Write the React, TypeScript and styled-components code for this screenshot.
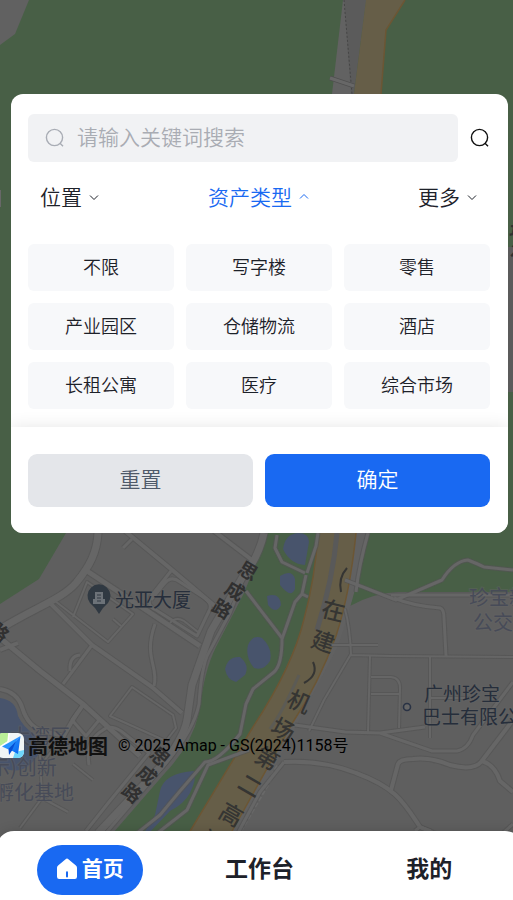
import React, { useState } from "react";
import styled, { createGlobalStyle } from "styled-components";

const sans = `Roboto, "Noto Sans CJK SC", sans-serif`;
const cjk = `"Noto Sans CJK SC", sans-serif`;

const GlobalStyle = createGlobalStyle`
  *, *::before, *::after { box-sizing: border-box; }
  body { margin: 0; background: #5f5f5f; font-family: ${cjk}; }
  button, input { font-family: inherit; font-weight: 350; }
`;

const Page = styled.div`
  position: relative;
  display: flex;
  flex-direction: column;
  min-height: 100vh;
  overflow: hidden;
`;

const MapLayer = styled.svg`
  position: absolute;
  inset: 0;
  width: 100%;
  height: 100%;
`;

const Content = styled.main`
  position: relative;
  flex: 1;
  display: flex;
  flex-direction: column;
  padding: 94px 5px 73px 0;
`;

const Panel = styled.form`
  margin-left: 11px;
  border-radius: 12px;
  background: #fff;
  overflow: hidden;
`;

const SearchRow = styled.div`
  display: flex;
  align-items: center;
  padding: 20px 18px 0 17px;
  gap: 12px;
`;

const SearchBox = styled.label`
  flex: 1;
  min-width: 0;
  height: 48px;
  display: flex;
  align-items: center;
  gap: 12px;
  padding: 0 16px 0 17px;
  border-radius: 6px;
  background: #f1f2f4;
  color: #a9adb5;
`;

const SearchInput = styled.input`
  flex: 1;
  min-width: 0;
  height: 40px;
  padding: 0 0 4px;
  border: 0;
  outline: 0;
  background: transparent;
  color: #1d2129;
  font-size: 21px;
  &::placeholder { color: #a9acb3; opacity: 1; }
`;

const IconButton = styled.button`
  display: flex;
  padding: 0;
  border: 0;
  background: transparent;
  color: #111;
  cursor: pointer;
`;

const Tabs = styled.div`
  display: flex;
  justify-content: space-between;
  align-items: center;
  height: 70px;
  padding: 0 31px 2px 29px;
`;

const Tab = styled.button<{ $active: boolean }>`
  display: flex;
  align-items: center;
  gap: 7px;
  padding: 0;
  border: 0;
  background: transparent;
  color: ${(p) => (p.$active ? "#1969f2" : "#1d2129")};
  font-size: 21px;
  line-height: 32px;
  cursor: pointer;
`;

const Options = styled.div`
  display: grid;
  grid-template-columns: repeat(3, 1fr);
  gap: 12px;
  padding: 12px 18px 18px 17px;
`;

const Option = styled.button`
  height: 47px;
  padding: 0 0 3px;
  border: 0;
  border-radius: 6px;
  background: #f7f8fa;
  color: #1d2129;
  font-size: 18px;
  cursor: pointer;
  &[aria-pressed="true"] { background: #e8f0ff; color: #1969f2; }
`;

const Actions = styled.div`
  position: relative;
  display: grid;
  grid-template-columns: 1fr 1fr;
  gap: 12px;
  padding: 27px 18px 26px 17px;
  background: #fff;
  box-shadow: 0 0 16px rgba(0, 0, 0, 0.1);
`;

const ActionButton = styled.button<{ $primary?: boolean }>`
  height: 53px;
  padding: 0 0 5px;
  border: 0;
  border-radius: 9px;
  background: ${(p) => (p.$primary ? "#1969f2" : "#e4e6ea")};
  color: ${(p) => (p.$primary ? "#fff" : "#4e5969")};
  font-size: 21px;
  cursor: pointer;
`;

const Credits = styled.div`
  display: flex;
  align-items: center;
  height: 25px;
  margin-top: auto;
  color: #000;
  white-space: nowrap;
`;

const Brand = styled.span`
  margin: 0 10px 0 4px;
  font-size: 20px;
  font-weight: 700;
  line-height: 24px;
  color: #111;
`;

const Copyright = styled.span`
  font-family: ${sans};
  font-size: 16px;
  line-height: 24px;
`;

const BottomNav = styled.nav`
  position: relative;
  display: grid;
  grid-template-columns: repeat(3, 1fr);
  align-items: center;
  justify-items: center;
  height: 69px;
  margin: 0 -10px 0 -4px;
  padding: 8px 9px 0;
  border-radius: 18px 18px 0 0;
  background: #fff;
  box-shadow: 0 0 12px rgba(0, 0, 0, 0.15);
`;

const NavLink = styled.a<{ $active?: boolean }>`
  display: flex;
  align-items: center;
  gap: 4px;
  height: 50px;
  padding: 0 19px 5px;
  border-radius: 25px;
  background: ${(p) => (p.$active ? "#1969f2" : "transparent")};
  color: ${(p) => (p.$active ? "#fff" : "#1d2129")};
  font-size: ${(p) => (p.$active ? 21 : 23)}px;
  font-weight: 700;
  text-decoration: none;
  svg { margin-top: 4px; }
`;

const SearchIcon = () => (
  <svg width="20" height="20" viewBox="0 0 20 20" fill="none" stroke="currentColor" strokeWidth="1.4" aria-hidden="true">
    <circle cx="9.5" cy="9.5" r="8.1" />
    <path d="M15 15.2 18 18.2" />
  </svg>
);

const Chevron = ({ up }: { up?: boolean }) => (
  <svg width="10" height="8" viewBox="0 0 10 8" fill="none" stroke="currentColor" strokeWidth="1" aria-hidden="true">
    <path d={up ? "M1 6.5 5 2.5 9 6.5" : "M1 3.5 5 7.5 9 3.5"} />
  </svg>
);

const HomeIcon = () => (
  <svg width="22" height="22" viewBox="0 0 22 22" aria-hidden="true">
    <path
      d="M9.6 1.2a2.1 2.1 0 0 1 2.8 0l7.5 6.3c.7.6 1.1 1.3 1.1 2.2v9.1a2.2 2.2 0 0 1-2.2 2.2H3.2A2.2 2.2 0 0 1 1 18.8V9.7c0-.9.4-1.6 1.1-2.2z"
      fill="#fff"
    />
    <path d="M11 14.2v4.3" stroke="#1969f2" strokeWidth="2" strokeLinecap="round" />
  </svg>
);

const AmapLogo = () => (
  <svg width="24" height="25" viewBox="0 0 24 25" aria-hidden="true">
    <defs>
      <clipPath id="logo-tile"><rect x="-3" width="27" height="25" rx="6" /></clipPath>
      <linearGradient id="logo-plane" x1="0" y1="0" x2="1" y2="1">
        <stop offset="0" stopColor="#2f9cff" />
        <stop offset="1" stopColor="#0560ee" />
      </linearGradient>
    </defs>
    <g clipPath="url(#logo-tile)">
      <rect x="-3" width="27" height="25" fill="#f1f5f6" />
      <path d="M-3 0H9L8 8-3 15z" fill="#b9ef98" />
      <path d="M9 0 8 9-3 16" stroke="#fff" strokeWidth="1.5" fill="none" />
      <path d="M13 25 15 19 24 17V25z" fill="#6fd6fb" />
      <path d="M20.5 3 2 13.5 8.5 16.500z" fill="#2894ff" />
      <path d="M20.5 3 8.5 16 11.5 17.5 18 21z" fill="url(#logo-plane)" />
      <path d="M16 8 8.5 16 9 22 12 17.500z" fill="#0650d6" />
    </g>
  </svg>
);

const roads: { d: string; w: number }[] = [
  { d: "M98 533C97 552 90 566 76 583C62 599 38 606 0 629", w: 7 },
  { d: "M125 531 171 569 216 607", w: 4 },
  { d: "M132 539 123 548", w: 3 },
  { d: "M214 531 252 560", w: 4 },
  { d: "M87 571 140 606 200 646", w: 5 },
  { d: "M171 571 152 595Q145 605 156 610L197 636 210 609Q212 603 203 597L180 582Q171 575 164 584L151 600", w: 3 },
  { d: "M170 623Q176 616 184 621L198 632", w: 2 },
  { d: "M51 604 92 645 152 687 182 713", w: 4 },
  { d: "M55 601 108 642 133 614 87 582 73 617", w: 2 },
  { d: "M113 619 121 626", w: 2 },
  { d: "M155 624C143 658 159 666 154 686", w: 3 },
  { d: "M0 638 40 671 84 705 120 738 140 756", w: 5 },
  { d: "M0 650 18 643", w: 4 },
  { d: "M92 645 63 684", w: 3 },
  { d: "M70 671Q69 656 80 655", w: 3 },
  { d: "M0 689Q17 692 22 707Q28 727 43 731L64 736Q70 723 83 705", w: 4 },
  { d: "M72 720 83 705 100 719 86 736Z", w: 3 },
  { d: "M110 716 132 687 173 715 176 728 166 741Z", w: 2 },
  { d: "M89 765Q85 741 103 730Q110 724 121 731L149 753 109 802 86 831", w: 3 },
  { d: "M69 729 40 766M73 764 93 780M40 755 42 798 20 828M42 798 68 812", w: 2 },
  { d: "M264 533Q259 557 242 578L211 631 192 685 187 720Q183 740 161 766L98 833", w: 7 },
  { d: "M247 568 230 613 207 656Q201 672 199 704Q194 730 166 763L106 833", w: 3 },
  { d: "M277 535 275 548 282 562 305 573M307 573 316 546 318 533M306 575 302 594 308 597M302 594 295 602 282 639Q282 665 274 672L253 689 246 704 240 734Q218 762 205 762L180 791 160 815 136 834", w: 3 },
  { d: "M246 591 282 638", w: 3 },
  { d: "M249 750 208 765 187 810 155 835", w: 3 },
  { d: "M368 533Q359 565 356 592", w: 3 },
  { d: "M345 580 396 600 442 580Q454 561 468 560Q478 564 484 567L513 570", w: 3 },
  { d: "M391 595H513M394 598Q413 606 440 608Q444 609 444 618L446 656", w: 3 },
  { d: "M350 655 390 656 513 657M345 609Q350 628 351 654L324 700 309 731M329 645H378", w: 2 },
  { d: "M370 656 368 732M371 677H391Q401 678 400 690L399 728M371 694H400M430 656V738M430 698H470", w: 2 },
  { d: "M295 725 345 732 380 733 425 727M380 733 432 751H457Q468 749 473 735L513 682", w: 3 },
  { d: "M284 762Q323 760 356 773C397 788 404 803 420 827L440 836", w: 4 },
  { d: "M391 790 398 764Q400 759 413 759Q431 757 450 765Q473 771 481 762L513 720M482 761Q495 765 500 781L513 792", w: 4 },
  { d: "M284 762 260 792 238 833M415 831 420 827 431 831M503 833 513 824", w: 3 },
];

const MapBackground = () => (
  <MapLayer viewBox="0 0 513 900" preserveAspectRatio="xMidYMin slice" aria-hidden="true">
    <rect width="513" height="900" fill="#5f5f5f" />
    <path d="M0 0H513V592H398Q373 593 350 606L370 533H66L39 579 0 604Z" fill="#485f46" />
    <path d="M0 0H29L15 34 0 45Z" fill="#616161" />
    <path d="M508 247H513V392H508Z" fill="#5b5b5b" />
    <path d="M0 190h1v17H0Z" fill="#686868" />
    <path d="M343 0H366L353 94H332Z" fill="#626262" />
    <path d="M344 0H366L354 94H351Z" fill="#5b5b5b" />
    <path d="M344 0 352 94" stroke="#464646" strokeDasharray="2 2" />
    <path d="M366 0H405L386 30 381 94H354Z" fill="#665e48" />
    <path d="M405 0 386 30 381 94" fill="none" stroke="#6c5634" strokeWidth="1.5" />
    <path d="M330 78 354 86" stroke="#505050" strokeWidth="5" />
    <path d="M330 78 354 86" stroke="#676767" strokeWidth="3" />

    <path d="M268 533H320L312 595Q298 650 262 716L190 833H113L165 773Q191 746 199 713Q204 671 216 647L244 593Z" fill="#485f46" />
    <path d="M357 533 369 533Q352 606 338 646L304 711 240 833H228L310 690 344 606Z" fill="#616161" />
    <path d="M318 533H356Q350 593 336 636Q318 685 293 722L231 833H189L253 727Q293 666 304 619Q315 579 318 533Z" fill="#665e48" />
    <path d="M318 533Q315 579 304 619Q293 666 253 727L189 833M356 533Q350 593 336 636Q318 685 293 722L231 833" fill="none" stroke="#6c5634" strokeWidth="1.5" />
    <path d="M337 533Q333 579 317 630" fill="none" stroke="#595959" strokeWidth="5" />
    <path d="M299 675Q282 713 270 729" fill="none" stroke="#5c5b55" strokeWidth="3" />
    <path d="M278 766 240 831" fill="none" stroke="#696969" strokeWidth="4" strokeDasharray="5 2" />
    <g fill="#48546c">
      <path d="M283 549Q285 534 298 533Q309 533 309 542L305 565Q290 564 283 549Z" />
      <path d="M280 576Q292 569 295 579V589Q291 599 280 585Z" />
      <path d="M267 596Q280 592 281 605Q276 615 268 605Z" />
      <path d="M248 645Q253 634 262 638Q273 648 270 661Q264 671 254 668Q245 657 248 645Z" />
      <path d="M225 669Q228 656 240 657Q250 665 245 675L236 682Q227 680 225 669Z" />
      <path d="M0 698Q16 700 18 716Q23 727 35 735L38 755Q23 779 0 766Z" />
      <path d="M160 791Q164 773 194 771Q197 779 190 793Q184 804 170 811L149 833H144L155 815Z" />
    </g>
    <g fill="none" strokeLinejoin="round">
      {roads.map((r) => <path key={"c" + r.d} d={r.d} stroke="#545454" strokeOpacity="0.7" strokeWidth={r.w + 2} />)}
      {roads.map((r) => <path key={r.d} d={r.d} stroke="#666" strokeWidth={r.w} />)}
    </g>

    <path d="M99 614Q96 608 90 603A11.5 11.5 0 1 1 108 603Q102 608 99 614Z" fill="#303942" />
    <path d="M93 604V599H95V592H103V599H105V604Z" fill="#6c7278" />
    <path d="M97 595h4M97 598h4M97 601h4" stroke="#303942" />
    <circle cx="407" cy="707" r="3.5" fill="#666" stroke="#293244" strokeWidth="1.6" />

    <g fontFamily={cjk} fontSize="19" fill="#262e3b" stroke="#666" strokeWidth="2" strokeOpacity="0.4" paintOrder="stroke">
      <text x="115" y="607">光亚大厦</text>
      <text x="424" y="701">广州珍宝</text>
      <text x="422" y="724">巴士有限公司</text>
      <g fill="#474b58" fontSize="20">
        <text x="469" y="605">珍宝新</text>
        <text x="473" y="630">公交</text>
        <text x="10" y="744">大湾区</text>
        <text x="-10" y="775">示)创新</text>
        <text x="-6" y="800">孵化基地</text>
      </g>
    </g>
    <g fontFamily={cjk} fontSize="19" fontWeight="700" fill="#303030" textAnchor="middle">
      <text transform="translate(248 571) rotate(31)" y="7">思</text>
      <text transform="translate(235 591) rotate(31)" y="7">成</text>
      <text transform="translate(222 609) rotate(31)" y="7">路</text>
      <text transform="translate(160 757) rotate(40)" y="7">思</text>
      <text transform="translate(147 775) rotate(40)" y="7">成</text>
      <text transform="translate(132 793) rotate(40)" y="7">路</text>
      <text transform="translate(-1 632) rotate(40)" y="7">路</text>
      <text transform="translate(519 231) rotate(10)" y="7">场</text>
      <text transform="translate(520 250) rotate(10)" y="7">流</text>
    </g>
    <g fontFamily={cjk} fontSize="23" fontWeight="500" fill="#353533" textAnchor="middle">
      <path d="M347 568Q338 578 341 592M313 662Q319 675 304 683" fill="none" stroke="#353533" strokeWidth="2" />
      <text transform="translate(333 611) rotate(14)" y="8">在</text>
      <text transform="translate(323 642) rotate(18)" y="8">建</text>
      <text transform="translate(299 702) rotate(24)" y="8">机</text>
      <text transform="translate(283 730) rotate(28)" y="8">场</text>
      <text transform="translate(267 759) rotate(30)" y="8">第</text>
      <text transform="translate(250 786) rotate(30)" y="8">二</text>
      <text transform="translate(231 815) rotate(30)" y="8">高</text>
      <text transform="translate(213 842) rotate(30)" y="8">速</text>
    </g>
  </MapLayer>
);

const tabs = ["位置", "资产类型", "更多"];
const options = ["不限", "写字楼", "零售", "产业园区", "仓储物流", "酒店", "长租公寓", "医疗", "综合市场"];

export default function App() {
  const [activeTab, setActiveTab] = useState("资产类型");
  const [selected, setSelected] = useState<string | null>(null);
  const [keyword, setKeyword] = useState("");

  return (
    <>
      <GlobalStyle />
      <Page>
        <MapBackground />
        <Content>
          <Panel onSubmit={(e) => e.preventDefault()}>
            <SearchRow>
              <SearchBox>
                <SearchIcon />
                <SearchInput
                  aria-label="关键词"
                  placeholder="请输入关键词搜索"
                  value={keyword}
                  onChange={(e) => setKeyword(e.target.value)}
                />
              </SearchBox>
              <IconButton type="submit" aria-label="搜索"><SearchIcon /></IconButton>
            </SearchRow>
            <Tabs>
              {tabs.map((t) => (
                <Tab key={t} type="button" $active={t === activeTab} aria-expanded={t === activeTab} onClick={() => setActiveTab(t)}>
                  {t}
                  <Chevron up={t === activeTab} />
                </Tab>
              ))}
            </Tabs>
            <Options>
              {options.map((o) => (
                <Option key={o} type="button" aria-pressed={o === selected} onClick={() => setSelected(o)}>{o}</Option>
              ))}
            </Options>
            <Actions>
              <ActionButton type="button" onClick={() => { setSelected(null); setKeyword(""); }}>重置</ActionButton>
              <ActionButton type="submit" $primary>确定</ActionButton>
            </Actions>
          </Panel>
          <Credits>
            <AmapLogo />
            <Brand>高德地图</Brand>
            <Copyright>© 2025 Amap - GS(2024)1158号</Copyright>
          </Credits>
        </Content>
        <BottomNav>
          <NavLink href="#home" $active aria-current="page"><HomeIcon />首页</NavLink>
          <NavLink href="#workbench">工作台</NavLink>
          <NavLink href="#mine">我的</NavLink>
        </BottomNav>
      </Page>
    </>
  );
}
